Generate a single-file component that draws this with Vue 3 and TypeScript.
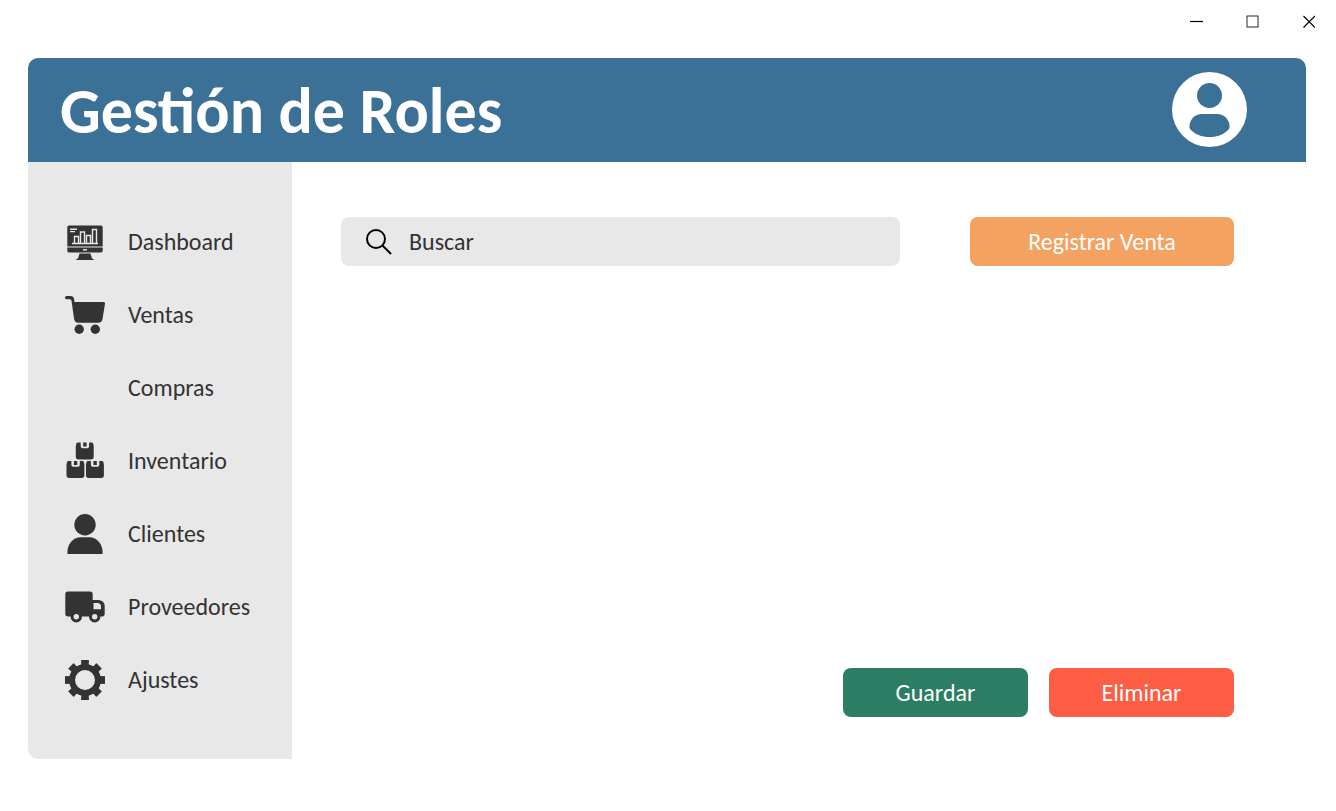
<script setup lang="ts">
import { ref } from 'vue'

type IconName = 'dashboard' | 'cart' | 'none' | 'boxes' | 'person' | 'truck' | 'gear'

interface MenuItem {
  label: string
  icon: IconName
}

const menu: MenuItem[] = [
  { label: 'Dashboard', icon: 'dashboard' },
  { label: 'Ventas', icon: 'cart' },
  { label: 'Compras', icon: 'none' },
  { label: 'Inventario', icon: 'boxes' },
  { label: 'Clientes', icon: 'person' },
  { label: 'Proveedores', icon: 'truck' },
  { label: 'Ajustes', icon: 'gear' },
]

const teeth = [0, 45, 90, 135, 180, 225, 270, 315]
const search = ref('')
</script>

<template>
  <div class="window">
    <div class="titlebar">
      <button type="button" class="control" aria-label="Minimizar">
        <svg width="14" height="14" viewBox="0 0 14 14"><path d="M1 7.5h13" stroke="#000" stroke-width="1.2" /></svg>
      </button>
      <button type="button" class="control" aria-label="Maximizar">
        <svg width="14" height="14" viewBox="0 0 14 14">
          <rect x="2" y="2" width="11" height="11" fill="none" stroke="#111" stroke-width="0.9" />
        </svg>
      </button>
      <button type="button" class="control" aria-label="Cerrar">
        <svg width="14" height="14" viewBox="0 0 14 14">
          <path d="M2.500 2l11.500 11.500M14 2L2.500 13.500" stroke="#000" stroke-width="1.200" />
        </svg>
      </button>
    </div>

    <header class="header">
      <h1>Gestión de Roles</h1>
      <button type="button" class="account" aria-label="Cuenta">
        <svg width="75" height="75" viewBox="0 0 75 75">
          <circle cx="37.5" cy="37.5" r="37.5" fill="#fff" />
          <circle cx="37.5" cy="23.5" r="12.5" fill="#3b7197" />
          <path
            fill="#3b7197"
            d="M30 42h15c7 0 12.500 5.500 12.500 12.300 0 1.500-.1 2-.8 2.900C52.500 62.300 45.500 65 37.500 65S22.500 62.300 18.300 57.200c-.7-.9-.8-1.400-.8-2.900C17.500 47.500 23 42 30 42z"
          />
        </svg>
      </button>
    </header>

    <div class="body">
      <nav class="sidebar" aria-label="Principal">
        <ul>
          <li v-for="item in menu" :key="item.label">
            <a href="#">
              <svg class="icon" viewBox="0 0 40 40" aria-hidden="true">
                <g v-if="item.icon === 'dashboard'">
                  <path d="M4 3.500h32q1.700 0 1.700 1.700v19.300H2.300V5.200q0-1.700 1.700-1.700zM2.300 25.500h35.400v3.300q0 1.700-1.700 1.700H4q-1.700 0-1.700-1.700zM14.500 31.500h11l1.500 5q2 0 2 1.500H11q0-1.500 2-1.500z" />
                  <g fill="none" stroke="#e8e8e8" stroke-width="1.4">
                    <path d="M5 7.200h7M5 9.600h5" />
                    <path d="M9.500 21.500v-7h4v7M15.500 21.500v-11.500h4v11.500M21.500 21.500v-8h4v8M27.500 21.500v-14h4v14M7 21.500h26" />
                    <path d="M18 27.800h4" stroke-width="1.500" />
                  </g>
                </g>
                <g v-else-if="item.icon === 'cart'">
                  <path d="M1.700 1H6q2.600 0 3 2.600L9.500 7H38.600q1.600 0 1.400 1.700L37.500 24q-.6 3.700-4.200 3.700H13q-3.300 0-3.900-3.700L6.500 5.800Q6.300 4.300 5 4.300H1.700Q0 4.300 0 2.700 0 1 1.700 1z" />
                  <circle cx="14.200" cy="34.300" r="4.700" />
                  <circle cx="30.300" cy="34.300" r="4.700" />
                </g>
                <g v-else-if="item.icon === 'boxes'">
                  <path
                    v-for="spot in ['9.300 -18.500', '0 0', '19.500 0']"
                    :key="spot"
                    :transform="`translate(${spot})`"
                    d="M3.600 20H6.400v3.200q0 2.600 2.400 2.600h3.600q2.400 0 2.400-2.600V20h2.400q1.500 0 1.700 1.300l.5 2.200v10.800q0 2.700-2.700 2.700H4.200q-2.700 0-2.700-2.700V23.500l.5-2.200Q2.200 20 3.600 20zM8.900 20h3.400v4H8.900z"
                  />
                </g>
                <g v-else-if="item.icon === 'person'">
                  <circle cx="20" cy="10.700" r="10.700" />
                  <path d="M16 23.300h8C32.500 23.300 37.700 30.500 37.700 39q0 1-1 1H3.300q-1 0-1-1C2.300 30.500 7.500 23.300 16 23.300z" />
                </g>
                <g v-else-if="item.icon === 'truck'">
                  <path
                    fill-rule="evenodd"
                    d="M3 4.500h22q2.700 0 2.700 2.700V13H33q6.700 0 6.700 6.700v7q0 2.800-3 2.800h-7H3Q.3 29.500.3 26.800V7.200Q.3 4.500 3 4.500zM28.500 16v6.200H36v-2.500Q36 16 32.300 16z"
                  />
                  <g stroke="#333" stroke-width="3" fill="#e8e8e8">
                    <circle cx="11.300" cy="29.700" r="4.200" />
                    <circle cx="29.700" cy="29.700" r="4.200" />
                  </g>
                </g>
                <g v-else-if="item.icon === 'gear'">
                  <circle cx="20" cy="20" r="13" fill="none" stroke="#333" stroke-width="6" />
                  <path
                    v-for="angle in teeth"
                    :key="angle"
                    d="M14.500 7q1.700-1 1.800-3L16 .6q.1-.6.7-.6h6.600q.6 0 .7.600L23.700 4q.1 2 1.800 3z"
                    :transform="`rotate(${angle} 20 20)`"
                  />
                </g>
              </svg>
              <span>{{ item.label }}</span>
            </a>
          </li>
        </ul>
      </nav>

      <main class="main">
        <div class="toolbar">
          <label class="search">
            <svg width="28" height="28" viewBox="0 0 28 28" fill="none" stroke="#000" stroke-width="2" aria-hidden="true">
              <circle cx="11" cy="11" r="9" />
              <path d="M17.500 17.500l8.500 8.500" />
            </svg>
            <input v-model="search" type="text" placeholder="Buscar" aria-label="Buscar" />
          </label>
          <button type="button" class="btn register">Registrar Venta</button>
        </div>
        <div class="actions">
          <button type="button" class="btn save">Guardar</button>
          <button type="button" class="btn remove">Eliminar</button>
        </div>
      </main>
    </div>
  </div>
</template>

<style>
body {
  margin: 0;
  background: #fff;
}
</style>

<style scoped>
.window {
  box-sizing: border-box;
  min-height: 100vh;
  display: flex;
  flex-direction: column;
  padding: 0 30px 52px 28px;
  font-family: Carlito, Calibri, Lato, sans-serif;
  font-size: 24px;
  line-height: 29px;
  color: #333;
}

button {
  font: inherit;
  border: 0;
  padding: 0;
  cursor: pointer;
}

svg {
  display: block;
}

.titlebar {
  display: flex;
  justify-content: flex-end;
  align-items: flex-start;
  height: 58px;
  margin-right: -30px;
}

.control {
  display: grid;
  place-items: center;
  width: 56px;
  height: 42px;
  background: none;
}

.header {
  display: flex;
  align-items: center;
  justify-content: space-between;
  height: 104px;
  box-sizing: border-box;
  padding: 0 59px 2px 32px;
  border-radius: 10px 10px 0 0;
  background: #3b7197;
  color: #fff;
}

h1 {
  margin: 0;
  padding-top: 4px;
  font-size: 64px;
  line-height: 80px;
  font-weight: 700;
}

.account {
  background: none;
}

.body {
  flex: 1;
  display: flex;
}

.sidebar {
  flex: none;
  box-sizing: border-box;
  width: 264px;
  padding: 43px 0;
  border-radius: 0 0 0 10px;
  background: #e8e8e8;
}

.sidebar ul {
  margin: 0;
  padding: 0;
  list-style: none;
}

.sidebar a {
  display: flex;
  align-items: center;
  gap: 23px;
  height: 73px;
  padding-left: 37px;
  color: inherit;
  text-decoration: none;
}

.icon {
  width: 40px;
  height: 40px;
  fill: #333;
}

.main {
  flex: 1;
  display: flex;
  flex-direction: column;
  justify-content: space-between;
  padding: 55px 72px 42px 49px;
}

.toolbar {
  display: flex;
  gap: 70px;
}

.search {
  flex: 1;
  display: flex;
  align-items: center;
  gap: 16px;
  height: 49px;
  padding-left: 24px;
  border-radius: 8px;
  background: #e8e8e8;
}

.search input {
  flex: 1;
  min-width: 0;
  padding: 0;
  border: 0;
  outline: 0;
  background: none;
  font: inherit;
  color: inherit;
}

.search input::placeholder {
  color: #333;
  opacity: 1;
}

.actions {
  display: flex;
  justify-content: flex-end;
  gap: 21px;
}

.btn {
  width: 185px;
  height: 49px;
  border-radius: 8px;
  color: #fff;
}

.register {
  width: 264px;
  background: #f4a261;
}

.save {
  background: #2b7e63;
}

.remove {
  background: #fd5d42;
}
</style>
